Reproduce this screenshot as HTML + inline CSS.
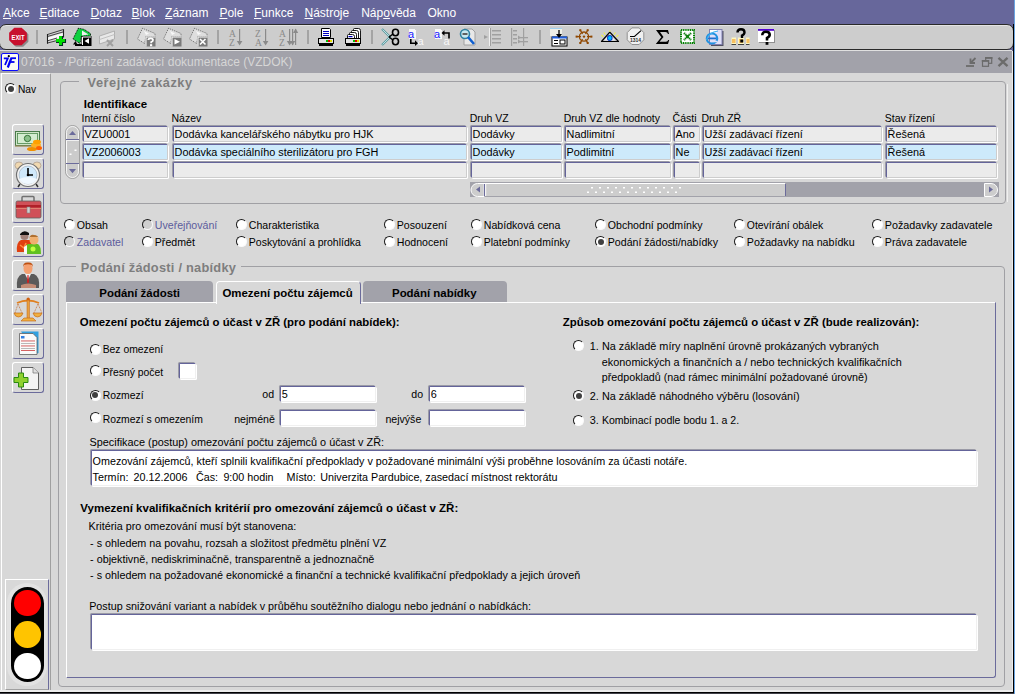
<!DOCTYPE html><html><head><meta charset="utf-8"><style>
*{box-sizing:border-box;margin:0;padding:0}
html,body{width:1015px;height:694px;overflow:hidden;background:#d8d8d8;font-family:"Liberation Sans",sans-serif;font-size:11px;color:#000}
.a{position:absolute}
.t{position:absolute;white-space:nowrap;line-height:20px}
.fld{position:absolute;background:#ebebeb;border-top:1px solid #64649a;border-left:1px solid #64649a;border-right:1px solid #cdcdcd;border-bottom:1px solid #cdcdcd;box-shadow:-1px -1px 0 #9a9aa6, 1px 1px 0 #fff;border-radius:1.5px}
.sel{background:#cdeafb}
.wf{background:#fff;border-right-color:#f0f0f0;border-bottom-color:#f0f0f0}
.radio{position:absolute;width:11px;height:11px;border-radius:50%;background:#fff;border:1px solid;border-color:#1a1a1a #fafafa #fafafa #1a1a1a}
.radio.on::after{content:"";position:absolute;left:1.5px;top:1.5px;width:6px;height:6px;border-radius:50%;background:#404040}
.radio.dr{background:#d0d0d0}
.gbox{position:absolute;border:1px solid #a0a0a4;border-radius:4px}
.ibtn{position:absolute;left:12px;width:32px;height:31px;border-top:1px solid #fff;border-left:1px solid #fff;border-right:1px solid #6b6b9b;border-bottom:1px solid #6b6b9b;border-radius:3px}
.tab{position:absolute;top:281px;height:22px;background:#a2a2aa;border-radius:4px 4px 0 0}
</style></head><body>
<div class="a" style="left:0;top:0;width:1015px;height:51px;background:#67679b"></div>
<div class="a" style="left:1014px;top:0;width:1px;height:694px;background:#6aa4e0"></div>
<div class="t" style="left:3px;top:3px;font-size:12px;color:#fff;text-underline-offset:1px"><u>A</u>kce</div>
<div class="t" style="left:39.4px;top:3px;font-size:12px;color:#fff;text-underline-offset:1px"><u>E</u>ditace</div>
<div class="t" style="left:90.6px;top:3px;font-size:12px;color:#fff;text-underline-offset:1px"><u>D</u>otaz</div>
<div class="t" style="left:131.6px;top:3px;font-size:12px;color:#fff;text-underline-offset:1px"><u>B</u>lok</div>
<div class="t" style="left:165.1px;top:3px;font-size:12px;color:#fff;text-underline-offset:1px"><u>Z</u>áznam</div>
<div class="t" style="left:219.4px;top:3px;font-size:12px;color:#fff;text-underline-offset:1px"><u>P</u>ole</div>
<div class="t" style="left:254px;top:3px;font-size:12px;color:#fff;text-underline-offset:1px"><u>F</u>unkce</div>
<div class="t" style="left:304.5px;top:3px;font-size:12px;color:#fff;text-underline-offset:1px"><u>N</u>ástroje</div>
<div class="t" style="left:361.2px;top:3px;font-size:12px;color:#fff;text-underline-offset:1px">Náp<u>o</u>věda</div>
<div class="t" style="left:427.4px;top:3px;font-size:12px;color:#fff;text-underline-offset:1px">Okno</div>
<div class="a" style="left:-1px;top:24px;width:1015px;height:26px;background:#cdcdcd;border:1px solid #2a2a2a;border-radius:7px 7px 7px 7px;box-shadow:inset 0 1px 0 #e4e4e4"></div>
<div class="a" style="left:0;top:50px;width:1012px;height:1px;background:#e0e0e0"></div>
<svg class="a" style="left:0;top:0" width="1015" height="52" viewBox="0 0 1015 52"><polygon points="28.37,41.67 23.17,46.87 15.83,46.87 10.63,41.67 10.63,34.33 15.83,29.13 23.17,29.13 28.37,34.33" fill="#8a8a8a"/><polygon points="26.87,40.17 21.67,45.37 14.33,45.37 9.13,40.17 9.13,32.83 14.33,27.63 21.67,27.63 26.87,32.83" fill="#c8102e"/><text x="18" y="39.6" font-family="Liberation Sans" font-weight="bold" font-size="6.6" fill="#fff" text-anchor="middle" textLength="13" lengthAdjust="spacingAndGlyphs">EXIT</text><rect x="36" y="30" width="2" height="14" fill="#a4a4a4"/><path d="M47.5,34.5 L63.5,29.5 L63.5,38 L47.5,43.5 Z" fill="#d8d8d8"/><path d="M48,37.5 L63,33 L63,37 L48,41 Z" fill="#fafafa"/><path d="M47.5,34.5 L63.5,29.5 M47.5,36.5 L63.5,31.8 M47.5,40.8 L57,38 M47.5,43 L56,40.8" stroke="#303030" stroke-width="0.9" fill="none"/><path d="M47.5,34 V43.8 M63.5,29.2 V37.5" stroke="#202020" stroke-width="1.1"/><path d="M56,39 H59 V36 H62.5 V39 H65.5 V42.5 H62.5 V45.5 H59 V42.5 H56 Z" fill="#00e000"/><path d="M59,42.5 H56 M62.5,42.5 V45.5 H59 M65.5,39 V42.5 H62.5 M62.5,36 V39" stroke="#003020" stroke-width="1.1" fill="none"/><path d="M78.3,28.3 L73,39 L80,43.5 L81.5,36 L90.5,36 L90.5,33.5 L84,29.3 Z" fill="#10d040" stroke="#000" stroke-width="0.9" stroke-dasharray="1 0.8"/><path d="M82,30.5 L88.5,34.5 L82,35.5 Z" fill="#f0f0f0"/><rect x="81.5" y="36" width="10" height="10" fill="#000"/><path d="M82.5,45 V37 H91" stroke="#fff" stroke-width="1" fill="none"/><path d="M84.5,41 L89,38.2 L89,43.8 Z" fill="#fff"/><path d="M73,44.5 L75.5,41 L77.5,44.5 Z" fill="#000"/><rect x="75" y="44" width="7" height="2" fill="#000"/><g transform="translate(99,29)"><path d="M0.5,7 L15.5,2 L15.5,10 L0.5,15 Z" fill="#e8e8e8" stroke="#b0b0b0" stroke-width="1"/><path d="M0.5,10.5 L15.5,5.5" stroke="#c0c0c0"/><path d="M8,11 L14,17 M14,11 L8,17" stroke="#a0a0a0" stroke-width="2"/></g><rect x="126" y="30" width="2" height="14" fill="#a4a4a4"/><g transform="translate(137,28)"><path d="M5.5,0.3 L0.5,11 L7.5,15.5 L9,8.5 L18,8.5 L18,5.5 Z" fill="#dedede" stroke="#6a6a6a" stroke-width="1" stroke-dasharray="1 1"/><path d="M7,3 L12,5.5 L9,7 Z" fill="#f8f8f8"/><rect x="8.5" y="8.5" width="10" height="10" fill="#7a7a7a"/><path d="M9,18.5 V9 H18.5" stroke="#fff" stroke-width="1" fill="none"/><path d="M11.3,12 Q11.3,10.3 13.6,10.3 Q16,10.3 16,12 Q16,13.3 14.2,14 V15.2" stroke="#fff" stroke-width="1.8" fill="none"/><rect x="13" y="16.2" width="2.2" height="2" fill="#fff"/></g><g transform="translate(163,28)"><path d="M5.5,0.3 L0.5,11 L7.5,15.5 L9,8.5 L18,8.5 L18,5.5 Z" fill="#dedede" stroke="#6a6a6a" stroke-width="1" stroke-dasharray="1 1"/><path d="M7,3 L12,5.5 L9,7 Z" fill="#f8f8f8"/><rect x="8.5" y="8.5" width="10" height="10" fill="#7a7a7a"/><path d="M9,18.5 V9 H18.5" stroke="#fff" stroke-width="1" fill="none"/><path d="M11.5,11 L17,13.8 L11.5,16.6 Z" fill="#fff"/></g><g transform="translate(189,28)"><path d="M5.5,0.3 L0.5,11 L7.5,15.5 L9,8.5 L18,8.5 L18,5.5 Z" fill="#dedede" stroke="#6a6a6a" stroke-width="1" stroke-dasharray="1 1"/><path d="M7,3 L12,5.5 L9,7 Z" fill="#f8f8f8"/><rect x="8.5" y="8.5" width="10" height="10" fill="#7a7a7a"/><path d="M9,18.5 V9 H18.5" stroke="#fff" stroke-width="1" fill="none"/><path d="M11,11 L16.5,16.5 M16.5,11 L11,16.5" stroke="#fff" stroke-width="1.6"/></g><rect x="217" y="30" width="2" height="14" fill="#a4a4a4"/><g transform="translate(229,28)" fill="#888" stroke="none"><text x="0" y="8.5" font-family="Liberation Serif" font-size="9.5" fill="#8a8a8a">A</text><text x="0" y="17.5" font-family="Liberation Serif" font-size="9.5" fill="#8a8a8a">Z</text><rect x="10" y="1" width="1.2" height="15" fill="#8a8a8a"/><path d="M7.8,13 L13.4,13 L10.6,17.5 Z" fill="#8a8a8a"/></g><g transform="translate(255,28)" fill="#888" stroke="none"><text x="0" y="8.5" font-family="Liberation Serif" font-size="9.5" fill="#8a8a8a">Z</text><text x="0" y="17.5" font-family="Liberation Serif" font-size="9.5" fill="#8a8a8a">A</text><rect x="10" y="1" width="1.2" height="15" fill="#8a8a8a"/><path d="M7.8,13 L13.4,13 L10.6,17.5 Z" fill="#8a8a8a"/></g><g transform="translate(279,28)" fill="#888" stroke="none"><text x="0" y="8.5" font-family="Liberation Serif" font-size="9.5" fill="#8a8a8a">A</text><text x="0" y="17.5" font-family="Liberation Serif" font-size="9.5" fill="#8a8a8a">Z</text><rect x="10" y="1" width="1.2" height="15" fill="#8a8a8a"/><path d="M7.8,13 L13.4,13 L10.6,17.5 Z" fill="#8a8a8a"/><rect x="13" y="1" width="1.2" height="16" fill="#8a8a8a"/><path d="M11,13 L16.2,13 L13.6,17.5 Z" fill="#8a8a8a"/><rect x="16" y="1" width="1.2" height="16" fill="#8a8a8a"/><path d="M14,5 L19.2,5 L16.6,0.5 Z" fill="#8a8a8a"/></g><rect x="307" y="30" width="2" height="14" fill="#a4a4a4"/><g transform="translate(318,28)"><path d="M3.5,0.5 h8 l1,1 v8 h-9 Z" fill="#fff" stroke="#000" stroke-width="1"/><rect x="5" y="3" width="6" height="1" fill="#0000c0"/><rect x="5" y="5" width="6" height="1" fill="#0000c0"/><rect x="5" y="7" width="6" height="1" fill="#0000c0"/><rect x="0.5" y="10.5" width="15" height="5" fill="#e4e4e4" stroke="#000" stroke-width="1"/><rect x="8" y="12" width="2" height="2" fill="#00c000"/><rect x="10" y="12" width="2" height="2" fill="#e00000"/><rect x="12" y="12" width="2" height="2" fill="#e0e000"/><rect x="1" y="16" width="14" height="2" fill="#000"/></g><g transform="translate(345,28)"><path d="M8.5,10 V1.5 Q8.5,0.5 9.5,0.5 H13.5 Q15.5,0.5 15.5,2.5 V10" fill="#fff" stroke="#000" stroke-width="0.9"/><path d="M6.5,10 V3.5 Q6.5,2.5 7.5,2.5 H11.5 Q13.5,2.5 13.5,4.5 V10" fill="#fff" stroke="#000" stroke-width="0.9"/><path d="M4.5,10 V5.5 Q4.5,4.5 5.5,4.5 H9.5 Q11.5,4.5 11.5,6.5 V10" fill="#fff" stroke="#000" stroke-width="0.9"/><path d="M2.5,10.5 V7.5 Q2.5,6.5 3.5,6.5 H7.5 Q9.5,6.5 9.5,8.5 V10.5" fill="#fff" stroke="#000" stroke-width="0.9"/><rect x="3.5" y="8" width="4" height="1.2" fill="#0000c0"/><rect x="0.5" y="10.5" width="15" height="5" fill="#e4e4e4" stroke="#000" stroke-width="1"/><rect x="8" y="12" width="2" height="2" fill="#00c000"/><rect x="10" y="12" width="2" height="2" fill="#e00000"/><rect x="12" y="12" width="2" height="2" fill="#e0e000"/><rect x="1" y="16" width="14" height="2" fill="#000"/></g><rect x="371" y="30" width="2" height="14" fill="#a4a4a4"/><g transform="translate(381,28)"><path d="M1,1 L9,9 L1,17" stroke="#5a9aa0" stroke-width="2.2" fill="none"/><path d="M1.5,1.5 L9,9 L1.5,16.5" stroke="#d8f0f0" stroke-width="0.8" fill="none"/><path d="M8,9 L12,6 M8,9 L12,12" stroke="#000" stroke-width="1.5"/><ellipse cx="14.5" cy="4.5" rx="3" ry="3.2" fill="none" stroke="#000" stroke-width="1.6"/><ellipse cx="14.5" cy="13.5" rx="3" ry="3.2" fill="none" stroke="#000" stroke-width="1.6"/></g><g transform="translate(407,27)"><path d="M1.5,1.5 h6 l2,2 v9 h-8 Z" fill="#f8f8f8" stroke="#c8c8c8" stroke-width="0.8"/><text x="1" y="10.5" font-family="Liberation Sans" font-size="11" fill="#1818ff">a</text><text x="10.5" y="18" font-family="Liberation Sans" font-size="11" fill="#f8f8f8">a</text><path d="M3.8,12 v4.2 h5" stroke="#000" stroke-width="1.6" fill="none"/><path d="M8,13.3 L11,16.2 L8,19 Z" fill="#000"/></g><g transform="translate(433,27)"><path d="M1.5,1.5 h6 l2,2 v9 h-8 Z" fill="#f8f8f8" stroke="#c8c8c8" stroke-width="0.8"/><text x="1" y="10.5" font-family="Liberation Sans" font-size="11" fill="#1818ff">a</text><text x="10.5" y="18" font-family="Liberation Sans" font-size="11" fill="#f8f8f8">a</text><path d="M16,11.5 v-5.5 h-5" stroke="#000" stroke-width="1.6" fill="none"/><path d="M11.5,3.2 L8.5,6 L11.5,8.8 Z" fill="#000"/></g><g transform="translate(459,28)"><path d="M5,1 h8 l3,3 v13 h-11 Z" fill="#e8e8e8" stroke="#a0a0a0"/><circle cx="6" cy="6" r="4.5" fill="#c8e8f0" stroke="#3080a0" stroke-width="1.6"/><rect x="3.5" y="5" width="5" height="2" fill="#606060"/><path d="M9,9 L15,16" stroke="#1060d0" stroke-width="2.6"/></g><g transform="translate(484,28)" fill="#a0a0a0"><rect x="5" y="0" width="1" height="18" fill="#f0f0f0"/><rect x="6" y="0" width="1" height="18"/><rect x="8" y="2" width="9" height="1.5"/><rect x="8" y="6" width="9" height="1.5"/><rect x="8" y="10" width="9" height="1.5"/><rect x="8" y="14" width="9" height="1.5"/><path d="M0,7 L4,9 L0,11 Z"/></g><g transform="translate(511,28)" fill="#a0a0a0"><rect x="0" y="0" width="1.2" height="18"/><rect x="12" y="0" width="1.2" height="18"/><rect x="2" y="2" width="4" height="1.5"/><rect x="2" y="6" width="4" height="1.5"/><rect x="2" y="10" width="4" height="1.5"/><rect x="2" y="14" width="4" height="1.5"/><rect x="7" y="9" width="10" height="1.3"/><rect x="7" y="13" width="10" height="1.3"/><path d="M7,7.5 L10,9.5 L7,11.5 Z"/><path d="M7,11.5 L10,13.5 L7,15.5 Z"/></g><rect x="539" y="30" width="2" height="14" fill="#a4a4a4"/><g transform="translate(550,28)"><rect x="0" y="0" width="12" height="8" fill="#f0f0e8"/><rect x="0" y="0" width="12" height="1" fill="#a0d0f0"/><rect x="2" y="9" width="15" height="9" fill="#fff" stroke="#000" stroke-width="1"/><rect x="2" y="8.5" width="15" height="2" fill="#2060e0"/><rect x="4" y="12" width="4" height="1" fill="#000"/><rect x="4" y="15" width="4" height="1" fill="#000"/><rect x="10" y="12" width="5" height="4" fill="none" stroke="#000" stroke-width="1"/><path d="M9,2 v6" stroke="#000" stroke-width="1.3"/><path d="M6,6 L9,10 L12,6 Z" fill="#000"/></g><circle cx="584" cy="36.6" r="4.6" fill="none" stroke="#904800" stroke-width="1.3"/><path d="M587.00,36.60 L591.60,36.60" stroke="#904800" stroke-width="1.3"/><path d="M585.50,39.20 L587.80,43.18" stroke="#904800" stroke-width="1.3"/><path d="M582.50,39.20 L580.20,43.18" stroke="#904800" stroke-width="1.3"/><path d="M581.00,36.60 L576.40,36.60" stroke="#904800" stroke-width="1.3"/><path d="M582.50,34.00 L580.20,30.02" stroke="#904800" stroke-width="1.3"/><path d="M585.50,34.00 L587.80,30.02" stroke="#904800" stroke-width="1.3"/><rect x="590.40" y="35.60" width="2" height="2" fill="#904800"/><rect x="586.70" y="42.01" width="2" height="2" fill="#904800"/><rect x="579.30" y="42.01" width="2" height="2" fill="#904800"/><rect x="575.60" y="35.60" width="2" height="2" fill="#904800"/><rect x="579.30" y="29.19" width="2" height="2" fill="#904800"/><rect x="586.70" y="29.19" width="2" height="2" fill="#904800"/><circle cx="584" cy="36.6" r="1.2" fill="#904800"/><path d="M601.5,41.5 L609.8,32.2 L618.5,41.5 Z" fill="#b8b8b8" stroke="#000" stroke-width="1.2" stroke-linejoin="round"/><path d="M604,40.5 L609.8,34 L615.5,40.5 Z" fill="#f0f0f0"/><rect x="607.6" y="35.6" width="4.4" height="4.8" rx="1.6" fill="#00c0ff" stroke="#0020c0" stroke-width="1"/><path d="M601.5,35 L603.3,36.8 M603.8,32.5 L605.3,34.5 M609.8,30.5 V32 M615.5,32.5 L614,34.5 M618.3,35 L616.4,36.8" stroke="#f0f040" stroke-width="1.1"/><g transform="translate(635.5,36.2)"><path d="M-3.6,-8.3 H3.6 L8.3,-3.6 V3.6 L3.6,8.3 H-3.6 L-8.3,3.6 V-3.6 Z" fill="#f0f0f0" stroke="#909090" stroke-width="1"/><path d="M-5.5,0.3 H-1 L5.5,-5.5" stroke="#000" stroke-width="1.1" fill="none"/><text x="0" y="5.8" font-family="Liberation Sans" font-weight="bold" font-size="5" fill="#303030" text-anchor="middle">1314</text></g><path d="M656,30 H668 L669,34 H668 Q667.5,32.2 665.5,32 H660 L663.5,37 L659.5,41.8 H666 Q667.8,41.6 668.2,40 H669.2 L668,44 H655.8 L661.3,37.2 Z" fill="#000"/><g transform="translate(680,29)"><rect x="1" y="1" width="13" height="13" fill="#fff" stroke="#008000" stroke-width="2" stroke-dasharray="1.1 0.7"/><path d="M4,4 L11,11 M11,4 L4,11" stroke="#108010" stroke-width="2.2" stroke-dasharray="1.2 0.6"/><rect x="6" y="6" width="3" height="3" fill="#108010"/></g><g transform="translate(705,28)"><rect x="6" y="3" width="12.5" height="15" fill="#505060"/><rect x="4.5" y="1.5" width="12.5" height="15" fill="#e0e0f8" stroke="#8080b0" stroke-width="1"/><rect x="5" y="2" width="7" height="2.5" fill="#fff"/><ellipse cx="7" cy="10.5" rx="5.2" ry="5" fill="none" stroke="#2090e0" stroke-width="2.2"/><rect x="3" y="9.5" width="8" height="1.8" fill="#2070d0"/><path d="M8.5,13.5 H12.5" stroke="#e0e0f8" stroke-width="1.6"/><path d="M1.5,12 Q4,4 13,3" stroke="#40b0f0" stroke-width="1.1" fill="none"/></g><g transform="translate(731,28)"><rect x="0.5" y="9.5" width="4.5" height="7" fill="#fff8c0" stroke="#404040" stroke-width="0" /><rect x="1" y="11" width="3.5" height="4" fill="#f8c060"/><rect x="7" y="9.5" width="6" height="7" fill="#fff8c0"/><rect x="8" y="11" width="4" height="4" fill="#f8c060"/><rect x="15" y="9.5" width="3.5" height="7" fill="#fff8c0"/><rect x="15.5" y="11" width="3" height="4" fill="#f8c060"/><rect x="0.5" y="16" width="4.5" height="1" fill="#404040"/><rect x="7" y="16" width="6" height="1" fill="#404040"/><rect x="15" y="16" width="3.5" height="1" fill="#404040"/><path d="M6.5,4.5 Q6.5,1.2 10,1.2 Q13.5,1.2 13.5,4.3 Q13.5,6.3 11,7.5 V10" stroke="#000" stroke-width="2.4" fill="none"/><rect x="9.3" y="11.5" width="3" height="3" fill="#000"/></g><g transform="translate(758,29)"><rect x="0" y="0" width="16" height="13" fill="#fff"/><rect x="0" y="0" width="16" height="1.8" fill="#5000d0"/><rect x="16" y="1" width="1" height="13" fill="#909090"/><rect x="1" y="13" width="16" height="1" fill="#909090"/><path d="M4.3,6.2 Q4.3,2.8 8,2.8 Q11.7,2.8 11.7,5.8 Q11.7,7.8 9,9 V11.5" stroke="#000" stroke-width="2.6" fill="none"/><rect x="7.6" y="13" width="2.8" height="2.8" fill="#000"/></g></svg>
<div class="a" style="left:0;top:51px;width:1012px;height:22px;background:#a2a2aa"></div>
<div class="a" style="left:1px;top:53px;width:18px;height:18px;background:#fafaf2;border:1.6px solid #0a0aff;border-radius:2px"></div>
<svg class="a" style="left:0;top:50px" width="20" height="22" viewBox="0 50 20 22"><circle cx="8.8" cy="56.2" r="1.1" fill="#000"/><path d="M3.8,58.3 H7.8 L5,65" stroke="#0000f0" stroke-width="1.8" fill="none"/><path d="M11.2,58.5 L7.8,67.5" stroke="#0000f0" stroke-width="2.2"/><path d="M10.4,58.2 H16" stroke="#0000f0" stroke-width="1.8"/><path d="M9.6,62 H14.5" stroke="#0000f0" stroke-width="1.8"/></svg>
<div class="t" style="left:21px;top:52px;font-size:12px;color:#d6d6d6">07016 - /Pořízení zadávací dokumentace (VZDOK)</div>
<svg class="a" style="left:955px;top:50px" width="60" height="24" viewBox="0 0 60 24" fill="none" stroke="#6b6b6b"><path d="M11,16 H19" stroke-width="1.8"/><path d="M20.5,8 L15.5,13" stroke-width="1.8"/><path d="M15.5,8.5 V13 H20" stroke-width="1.8"/><rect x="30.7" y="7.8" width="6" height="5.5" stroke-width="1.2"/><path d="M30,7.9 H37.5" stroke-width="1.8"/><rect x="27.5" y="10.8" width="6" height="5.5" fill="#a2a2aa" stroke-width="1.2"/><path d="M26.8,10.9 H34.2" stroke-width="1.8"/><path d="M43.5,7.8 L52.5,16.2 M52.5,7.8 L43.5,16.2" stroke-width="2.3"/></svg>
<div class="a" style="left:1012px;top:51px;width:1px;height:641px;background:#ececec"></div>
<div class="a" style="left:1013px;top:24px;width:1px;height:669px;background:#000"></div>
<div class="a" style="left:0;top:690px;width:1013px;height:2px;background:#ececec"></div>
<div class="a" style="left:0;top:692px;width:1014px;height:1px;background:#000"></div>
<div class="a" style="left:0;top:693px;width:1014px;height:1px;background:#404048"></div>
<div class="a" style="left:1px;top:73px;width:50px;height:617px;border-top:1px solid #fff;border-left:1px solid #fff;border-right:1px solid #a0a0a0"></div>
<div class="radio on" style="left:5px;top:83px"></div>
<div class="t" style="left:18px;top:80px;font-size:10.2px">Nav</div>
<div class="ibtn" style="top:124px"></div>
<div class="ibtn" style="top:158px"></div>
<div class="ibtn" style="top:192px"></div>
<div class="ibtn" style="top:226px"></div>
<div class="ibtn" style="top:260px"></div>
<div class="ibtn" style="top:294px"></div>
<div class="ibtn" style="top:328px"></div>
<div class="ibtn" style="top:362px"></div>
<svg class="a" style="left:0;top:0" width="60" height="400" viewBox="0 0 60 400"><g transform="translate(12,124)"><rect x="3.5" y="7.5" width="24" height="14" fill="#cfe6c8" stroke="#4a7a4a" stroke-width="1"/><rect x="5.5" y="9.5" width="20" height="10" fill="#d4ecd0" stroke="#3a7a3a" stroke-width="0.7"/><circle cx="15.5" cy="14.5" r="3.2" fill="#8ac08a" stroke="#206020" stroke-width="0.8"/><rect x="3" y="21.5" width="25" height="1.2" fill="#a09060"/><ellipse cx="24" cy="21" rx="5" ry="2.5" fill="#ffb020"/><ellipse cx="25" cy="18" rx="4" ry="2.2" fill="#ffa000"/><ellipse cx="20" cy="25" rx="5" ry="2" fill="#f09000"/><ellipse cx="27" cy="24" rx="3" ry="2" fill="#ff6000"/></g><g transform="translate(12,158)"><ellipse cx="7" cy="7.5" rx="4" ry="3.5" fill="#f0d8b0" stroke="#b0a090" stroke-width="0.8"/><ellipse cx="25" cy="7.5" rx="4" ry="3.5" fill="#f0d8b0" stroke="#b0a090" stroke-width="0.8"/><path d="M8,26 L6,29 M24,26 L26,29" stroke="#303030" stroke-width="1.5"/><circle cx="16" cy="17" r="11.5" fill="#f4f4f4" stroke="#707070" stroke-width="1.2"/><circle cx="16" cy="17" r="9" fill="#cfe8fb" stroke="#9ab" stroke-width="0.6"/><path d="M7,21 Q16,17 25,21 Q22,26 16,26 Q10,26 7,21 Z" fill="#f0f8ff"/><path d="M16,10 V17 H21" stroke="#000" stroke-width="1.6" fill="none"/><circle cx="16" cy="17" r="1.3" fill="#000"/></g><g transform="translate(12,192)"><path d="M10,9 V5.5 Q10,4.5 11,4.5 H21 Q22,4.5 22,5.5 V9" fill="none" stroke="#707070" stroke-width="1.5"/><rect x="4" y="9" width="25" height="17" rx="1.5" fill="#d05058" stroke="#606060" stroke-width="0.8"/><rect x="4" y="13" width="25" height="2.5" fill="#b02028"/><rect x="4" y="16" width="25" height="1" fill="#e08070"/><rect x="15" y="15" width="3" height="6" fill="#d0d0d0" stroke="#808080" stroke-width="0.6"/></g><g transform="translate(12,226)"><path d="M5,26 Q4,16 9,14 H18 Q21,16 20,26 Z" fill="#e04010"/><path d="M8,19 L12,22 L14,17" stroke="#ff9040" stroke-width="1.5" fill="none"/><circle cx="12.5" cy="10" r="4" fill="#a08078"/><path d="M8,8 Q12,3 17,7 L17,9 H8 Z" fill="#101010"/><path d="M12,28 Q11,20 16,18 H26 Q29,20 29,28 Z" fill="#60c020"/><path d="M12,28 V21 L15,19 V28 Z" fill="#f8f8f8"/><circle cx="22" cy="14" r="4.5" fill="#f0b070"/><path d="M17,13 Q18,8 22,9 Q26,9 27,13 L26,11 H18 Z" fill="#b07030"/><circle cx="21" cy="23" r="2.5" fill="#c0ff40"/></g><g transform="translate(12,260)"><path d="M5,28 Q4,16 10,14 H22 Q28,16 27,28 Z" fill="#5a5a5a"/><path d="M13,14 L16,20 L19,14 Z" fill="#f0f0f0"/><path d="M15.5,15 L16.5,15 L17,22 L16,24 L15,22 Z" fill="#d02020"/><path d="M9,25 Q16,22 24,25 V28 H9 Z" fill="#f0a080" opacity="0.7"/><ellipse cx="16" cy="8.5" rx="4.5" ry="5.5" fill="#f4a070"/><path d="M11,7 Q11,2 16,2.5 Q21,2 21,7 L20,5 Q16,3.5 12,5 Z" fill="#c05010"/></g><g transform="translate(12,294)"><path d="M5,9 Q16,4 27,9" stroke="#e08020" stroke-width="1.8" fill="none"/><rect x="15" y="5" width="2.4" height="20" fill="#e8a040" stroke="#c06010" stroke-width="0.5"/><circle cx="16.2" cy="5" r="1.6" fill="#d06010"/><path d="M6,10 L3,19 M6,10 L10,19 M26,10 L22,19 M26,10 L30,19" stroke="#c06020" stroke-width="0.7" stroke-dasharray="1 0.7"/><path d="M2,19 H11 Q10,23 6.5,23 Q3,23 2,19 Z" fill="#f0b040" stroke="#c06010" stroke-width="0.6"/><path d="M21,19 H30 Q29,23 25.5,23 Q22,23 21,19 Z" fill="#f0b040" stroke="#c06010" stroke-width="0.6"/><path d="M9,27 L12,24 H21 L24,27 Z" fill="#f0b040" stroke="#c06010" stroke-width="0.6"/></g><g transform="translate(12,328)"><path d="M9,3.5 H26.5 V25 L24,26 Z" fill="#30a0e0"/><path d="M7.5,5.5 H21 L25,9.5 V26.5 H7.5 Z" fill="#fafafa" stroke="#606060" stroke-width="0.8"/><rect x="9" y="8" width="3.5" height="2.5" fill="#3080e0"/><rect x="9" y="12.5" width="14" height="0.9" fill="#d05050"/><rect x="9" y="15" width="14" height="0.9" fill="#b0b0b0"/><rect x="9" y="17.5" width="14" height="0.9" fill="#d05050"/><rect x="9" y="20" width="14" height="0.9" fill="#b0b0b0"/><rect x="9" y="22" width="14" height="0.9" fill="#d05050"/></g><g transform="translate(12,362)"><path d="M9.5,5.5 H21 L26.5,11 V27.5 H9.5 Z" fill="#f4f4f4" stroke="#505050" stroke-width="0.9"/><path d="M21,5.5 V11 H26.5" fill="#e0e0e0" stroke="#707070" stroke-width="0.7"/><path d="M6.5,11 H11.5 V15.5 H16 V20.5 H11.5 V25 H6.5 V20.5 H2 V15.5 H6.5 Z" fill="#90d030" stroke="#2a8a10" stroke-width="1"/></g></svg>
<div class="a" style="left:5px;top:579px;width:44px;height:111px;border-top:1px solid #fff;border-left:1px solid #fff;border-right:1px solid #6b6b9b;border-bottom:1px solid #a0a0a0"></div>
<div class="a" style="left:7px;top:583px;width:40px;height:103px;background:#e2e2e2;border-radius:20px"></div>
<div class="a" style="left:10.5px;top:587px;width:33px;height:95px;background:#000;border-radius:17px"></div>
<div class="a" style="left:14px;top:589.5px;width:26.5px;height:26.5px;background:#f00;border-radius:50%"></div>
<div class="a" style="left:14px;top:621px;width:26.5px;height:26.5px;background:#ffc400;border-radius:50%"></div>
<div class="a" style="left:14px;top:652.5px;width:26.5px;height:26.5px;background:#fff;border-radius:50%"></div>
<div class="gbox" style="left:60px;top:81px;width:946px;height:123px"></div>
<div class="a" style="left:1007px;top:84px;width:1px;height:118px;background:#f0f0f0"></div>
<div class="a" style="left:79px;top:74px;width:121px;height:16px;background:#d8d8d8"></div>
<div class="t" style="left:87.6px;top:73px;font-size:12.8px;font-weight:700;color:#7e7e7e;letter-spacing:0.5px">Veřejné zakázky</div>
<div class="t" style="left:83.8px;top:94px;font-size:11.5px;font-weight:700">Identifikace</div>
<div class="t" style="left:81.6px;top:109px;font-size:10.33px">Interní číslo</div>
<div class="t" style="left:171.5px;top:108px;font-size:10.5px">Název</div>
<div class="t" style="left:469.7px;top:108px;font-size:10.5px">Druh VZ</div>
<div class="t" style="left:563.7px;top:108px;font-size:10.5px">Druh VZ dle hodnoty</div>
<div class="t" style="left:672.6px;top:108px;font-size:10.5px">Části</div>
<div class="t" style="left:701.5px;top:108px;font-size:10.5px">Druh ZŘ</div>
<div class="t" style="left:884.8px;top:108px;font-size:10.5px">Stav řízení</div>
<div class="fld" style="left:83px;top:126px;width:85px;height:16px"></div>
<div class="t" style="left:84.6px;top:124px;font-size:10.85px">VZU0001</div>
<div class="fld" style="left:173px;top:126px;width:294px;height:16px"></div>
<div class="t" style="left:174.6px;top:124px;font-size:10.85px">Dodávka kancelářského nábytku pro HJK</div>
<div class="fld" style="left:471px;top:126px;width:91px;height:16px"></div>
<div class="t" style="left:472.6px;top:124px;font-size:10.85px">Dodávky</div>
<div class="fld" style="left:565px;top:126px;width:106px;height:16px"></div>
<div class="t" style="left:566.6px;top:124px;font-size:10.85px">Nadlimitní</div>
<div class="fld" style="left:674px;top:126px;width:26px;height:16px"></div>
<div class="t" style="left:675.6px;top:124px;font-size:10.85px">Ano</div>
<div class="fld" style="left:703px;top:126px;width:179px;height:16px"></div>
<div class="t" style="left:704.6px;top:124px;font-size:10.85px">Užší zadávací řízení</div>
<div class="fld" style="left:886px;top:126px;width:111px;height:16px"></div>
<div class="t" style="left:887.6px;top:124px;font-size:10.85px">Řešená</div>
<div class="fld sel" style="left:83px;top:144px;width:85px;height:16px"></div>
<div class="t" style="left:84.6px;top:142px;font-size:10.85px">VZ2006003</div>
<div class="fld sel" style="left:173px;top:144px;width:294px;height:16px"></div>
<div class="t" style="left:174.6px;top:142px;font-size:10.85px">Dodávka speciálního sterilizátoru pro FGH</div>
<div class="fld sel" style="left:471px;top:144px;width:91px;height:16px"></div>
<div class="t" style="left:472.6px;top:142px;font-size:10.85px">Dodávky</div>
<div class="fld sel" style="left:565px;top:144px;width:106px;height:16px"></div>
<div class="t" style="left:566.6px;top:142px;font-size:10.85px">Podlimitní</div>
<div class="fld sel" style="left:674px;top:144px;width:26px;height:16px"></div>
<div class="t" style="left:675.6px;top:142px;font-size:10.85px">Ne</div>
<div class="fld sel" style="left:703px;top:144px;width:179px;height:16px"></div>
<div class="t" style="left:704.6px;top:142px;font-size:10.85px">Užší zadávací řízení</div>
<div class="fld sel" style="left:886px;top:144px;width:111px;height:16px"></div>
<div class="t" style="left:887.6px;top:142px;font-size:10.85px">Řešená</div>
<div class="fld" style="left:83px;top:162px;width:85px;height:16px"></div>
<div class="fld" style="left:173px;top:162px;width:294px;height:16px"></div>
<div class="fld" style="left:471px;top:162px;width:91px;height:16px"></div>
<div class="fld" style="left:565px;top:162px;width:106px;height:16px"></div>
<div class="fld" style="left:674px;top:162px;width:26px;height:16px"></div>
<div class="fld" style="left:703px;top:162px;width:179px;height:16px"></div>
<div class="fld" style="left:886px;top:162px;width:111px;height:16px"></div>
<svg class="a" style="left:0;top:0" width="1015" height="210" viewBox="0 0 1015 210">
<rect x="65.5" y="125.5" width="14" height="53" rx="7" fill="#cbcbcb" stroke="#a0a0a0" stroke-width="1"/>
<path d="M66.5,139 V132.5 A6,6 0 0 1 78.5,132.5 V139" fill="none" stroke="#f4f4f4" stroke-width="1"/>
<path d="M66.5,164 V171.5 A6,6 0 0 0 78.5,171.5 V164" fill="none" stroke="#f4f4f4" stroke-width="1"/>
<path d="M66.5,140 V163" stroke="#fafafa" stroke-width="1"/>
<path d="M66,139.5 H79" stroke="#6b6b9b" stroke-width="1"/><path d="M66,140.5 H79" stroke="#f0f0f0" stroke-width="1"/>
<path d="M66,163.5 H79" stroke="#6b6b9b" stroke-width="1"/>
<path d="M69,135 L72.5,131 L76,135 Z" fill="#6b6b9b"/>
<path d="M69,169 L72.5,173.2 L76,169 Z" fill="#6b6b9b"/>
<rect x="69.5" y="153.5" width="2" height="1.5" fill="#fff"/><rect x="74.5" y="149.5" width="2" height="1.5" fill="#fff"/>
<rect x="470" y="182" width="529" height="15" fill="#a2a2aa"/>
<path d="M484,183.5 H785.5 V196 H484" fill="#cdcdcd"/>
<path d="M484,183.5 H785" stroke="#fff" stroke-width="1"/>
<path d="M785.5,184 V196" stroke="#6b6b9b" stroke-width="1"/>
<path d="M484,183.5 H477.5 A6.5,6.5 0 0 0 477.5,196.5 H484 Z" fill="#cdcdcd" stroke="#fff" stroke-width="1"/>
<path d="M484.5,184 V196" stroke="#6b6b9b" stroke-width="1.2"/><path d="M485.7,184 V196" stroke="#fff" stroke-width="1"/>
<path d="M480,186.5 L476,189.5 L480,192.5 Z" fill="#6b6b9b"/>
<rect x="591" y="187" width="2" height="1.5" fill="#fff"/><rect x="587" y="191.5" width="2" height="1.5" fill="#fff"/><rect x="599" y="187" width="2" height="1.5" fill="#fff"/><rect x="595" y="191.5" width="2" height="1.5" fill="#fff"/><rect x="607" y="187" width="2" height="1.5" fill="#fff"/><rect x="603" y="191.5" width="2" height="1.5" fill="#fff"/><rect x="615" y="187" width="2" height="1.5" fill="#fff"/><rect x="611" y="191.5" width="2" height="1.5" fill="#fff"/><rect x="623" y="187" width="2" height="1.5" fill="#fff"/><rect x="619" y="191.5" width="2" height="1.5" fill="#fff"/><rect x="631" y="187" width="2" height="1.5" fill="#fff"/><rect x="627" y="191.5" width="2" height="1.5" fill="#fff"/><rect x="639" y="187" width="2" height="1.5" fill="#fff"/><rect x="635" y="191.5" width="2" height="1.5" fill="#fff"/><rect x="647" y="187" width="2" height="1.5" fill="#fff"/><rect x="643" y="191.5" width="2" height="1.5" fill="#fff"/><rect x="655" y="187" width="2" height="1.5" fill="#fff"/><rect x="651" y="191.5" width="2" height="1.5" fill="#fff"/><rect x="663" y="187" width="2" height="1.5" fill="#fff"/><rect x="659" y="191.5" width="2" height="1.5" fill="#fff"/><rect x="671" y="187" width="2" height="1.5" fill="#fff"/><rect x="667" y="191.5" width="2" height="1.5" fill="#fff"/><rect x="679" y="187" width="2" height="1.5" fill="#fff"/><rect x="675" y="191.5" width="2" height="1.5" fill="#fff"/>
<path d="M984.5,196.5 V183.5 H991 A6.5,6.5 0 0 1 991,196.5 Z" fill="#cdcdcd" stroke="#fff" stroke-width="1"/>
<path d="M989,186.5 L993,189.5 L989,192.5 Z" fill="#6b6b9b"/>
</svg>
<div class="radio" style="left:64px;top:219px"></div>
<div class="t" style="left:76.8px;top:215px;font-size:10.6px">Obsah</div>
<div class="radio dr" style="left:64px;top:236px"></div>
<div class="t" style="left:76.8px;top:232px;font-size:10.6px;color:#5c5c9c">Zadavatel</div>
<div class="radio dr" style="left:142px;top:219px"></div>
<div class="t" style="left:154.8px;top:215px;font-size:10.6px;color:#5c5c9c">Uveřejňování</div>
<div class="radio" style="left:142px;top:236px"></div>
<div class="t" style="left:154.8px;top:232px;font-size:10.6px">Předmět</div>
<div class="radio" style="left:236px;top:219px"></div>
<div class="t" style="left:248.8px;top:215px;font-size:10.57px">Charakteristika</div>
<div class="radio" style="left:236px;top:236px"></div>
<div class="t" style="left:248.8px;top:232px;font-size:10.5px">Poskytování a prohlídka</div>
<div class="radio" style="left:384px;top:219px"></div>
<div class="t" style="left:396.8px;top:215px;font-size:10.6px">Posouzení</div>
<div class="radio" style="left:384px;top:236px"></div>
<div class="t" style="left:396.8px;top:232px;font-size:10.6px">Hodnocení</div>
<div class="radio" style="left:471px;top:219px"></div>
<div class="t" style="left:483.8px;top:215px;font-size:10.6px">Nabídková cena</div>
<div class="radio" style="left:471px;top:236px"></div>
<div class="t" style="left:483.8px;top:233px;font-size:10.4px">Platební podmínky</div>
<div class="radio" style="left:595px;top:219px"></div>
<div class="t" style="left:607.8px;top:215px;font-size:10.6px">Obchodní podmínky</div>
<div class="radio on" style="left:595px;top:236px"></div>
<div class="t" style="left:607.8px;top:232px;font-size:10.6px">Podání žádosti/nabídky</div>
<div class="radio" style="left:734px;top:219px"></div>
<div class="t" style="left:746.8px;top:216px;font-size:10.41px">Otevírání obálek</div>
<div class="radio" style="left:734px;top:236px"></div>
<div class="t" style="left:746.8px;top:232px;font-size:10.66px">Požadavky na nabídku</div>
<div class="radio" style="left:872px;top:219px"></div>
<div class="t" style="left:884.8px;top:215px;font-size:10.75px">Požadavky zadavatele</div>
<div class="radio" style="left:872px;top:236px"></div>
<div class="t" style="left:884.8px;top:232px;font-size:10.65px">Práva zadavatele</div>
<div class="gbox" style="left:58px;top:266px;width:947px;height:421px"></div>
<div class="a" style="left:76px;top:259px;width:165px;height:16px;background:#d8d8d8"></div>
<div class="t" style="left:80.8px;top:258px;font-size:12.8px;font-weight:700;color:#7e7e7e;letter-spacing:0.25px">Podání žádosti / nabídky</div>
<div class="tab" style="left:66px;width:147px"></div>
<div class="tab" style="left:363px;width:144px"></div>
<div class="a" style="left:66px;top:302px;width:930px;height:376px;border-top:1px solid #fff;border-left:1px solid #fff;border-right:1px solid #6b6b9b;border-bottom:1px solid #6b6b9b;border-radius:0 0 3px 0"></div>
<div class="tab" style="left:215.5px;width:145px;background:#d8d8d8;border-top:1px solid #fff;border-left:1px solid #fff;border-right:1px solid #6b6b9b;height:23px"></div>
<div class="t" style="left:99.3px;top:283px;font-size:11.45px;font-weight:700">Podání žádosti</div>
<div class="t" style="left:222.4px;top:283px;font-size:11.45px;font-weight:700">Omezení počtu zájemců</div>
<div class="t" style="left:392px;top:283px;font-size:11.45px;font-weight:700">Podání nabídky</div>
<div class="t" style="left:79.8px;top:312px;font-size:11.38px;font-weight:700">Omezení počtu zájemců o účast v ZŘ (pro podání nabídek):</div>
<div class="t" style="left:562.8px;top:312px;font-size:11.39px;font-weight:700">Způsob omezování počtu zájemců o účast v ZŘ (bude realizován):</div>
<div class="radio" style="left:89.5px;top:343.5px"></div>
<div class="t" style="left:102.7px;top:340px;font-size:10.37px">Bez omezení</div>
<div class="radio" style="left:89.5px;top:365px"></div>
<div class="t" style="left:102.7px;top:363px;font-size:10.37px">Přesný počet</div>
<div class="radio on" style="left:89.5px;top:389.5px"></div>
<div class="t" style="left:102.7px;top:386px;font-size:10.37px">Rozmezí</div>
<div class="radio" style="left:89.5px;top:412px"></div>
<div class="t" style="left:102.7px;top:410px;font-size:10.37px">Rozmezí s omezením</div>
<div class="fld wf" style="left:179px;top:363px;width:17px;height:16px"></div>
<div class="t" style="left:262.3px;top:384px;font-size:10.6px">od</div>
<div class="fld wf" style="left:280px;top:386px;width:96px;height:16px"></div>
<div class="t" style="left:281.8px;top:384px;font-size:10.85px">5</div>
<div class="t" style="left:411.3px;top:384px;font-size:10.6px">do</div>
<div class="fld wf" style="left:429px;top:386px;width:96px;height:16px"></div>
<div class="t" style="left:430.8px;top:384px;font-size:10.85px">6</div>
<div class="t" style="left:234.2px;top:408.5px;font-size:10.6px">nejméně</div>
<div class="fld wf" style="left:280px;top:410px;width:96px;height:16px"></div>
<div class="t" style="left:385.4px;top:408.5px;font-size:10.6px">nejvýše</div>
<div class="fld wf" style="left:429px;top:410px;width:96px;height:16px"></div>
<div class="radio" style="left:573px;top:340px"></div>
<div class="t" style="left:589.8px;top:336px;font-size:10.85px">1.</div>
<div class="t" style="left:601.9px;top:336px;font-size:10.88px">Na základě míry naplnění úrovně prokázaných vybraných</div>
<div class="t" style="left:601.8px;top:352px;font-size:10.86px">ekonomických a finančních a / nebo technických kvalifikačních</div>
<div class="t" style="left:601.8px;top:367px;font-size:10.72px">předpokladů (nad rámec minimální požadované úrovně)</div>
<div class="radio on" style="left:573px;top:390px"></div>
<div class="t" style="left:589.8px;top:386px;font-size:10.85px">2.</div>
<div class="t" style="left:601.9px;top:386px;font-size:10.85px">Na základě náhodného výběru (losování)</div>
<div class="radio" style="left:573px;top:414.5px"></div>
<div class="t" style="left:589.8px;top:410px;font-size:10.85px">3.</div>
<div class="t" style="left:601.9px;top:410px;font-size:10.55px">Kombinací podle bodu 1. a 2.</div>
<div class="t" style="left:89.5px;top:432px;font-size:10.87px">Specifikace (postup) omezování počtu zájemců o účast v ZŘ:</div>
<div class="fld wf" style="left:91px;top:450px;width:886px;height:36px"></div>
<div class="t" style="left:92.6px;top:451px;font-size:10.75px">Omezování zájemců, kteří splnili kvalifikační předpoklady v požadované minimální výši proběhne losováním za účasti notáře.</div>
<div class="t" style="left:92.6px;top:467px;font-size:10.75px">Termín:</div>
<div class="t" style="left:133.6px;top:467px;font-size:10.75px">20.12.2006</div>
<div class="t" style="left:196px;top:467px;font-size:10.75px">Čas:</div>
<div class="t" style="left:223.4px;top:467px;font-size:10.75px">9:00 hodin</div>
<div class="t" style="left:286.5px;top:467px;font-size:10.75px">Místo:</div>
<div class="t" style="left:320.2px;top:467px;font-size:10.75px">Univerzita Pardubice, zasedací místnost rektorátu</div>
<div class="t" style="left:80.3px;top:498px;font-size:11.5px;font-weight:700">Vymezení kvalifikačních kritérií pro omezování zájemců o účast v ZŘ:</div>
<div class="t" style="left:88.6px;top:516px;font-size:10.78px">Kritéria pro omezování musí být stanovena:</div>
<div class="t" style="left:90.1px;top:533px;font-size:10.78px">- s ohledem na povahu, rozsah a složitost předmětu plnění VZ</div>
<div class="t" style="left:90.1px;top:548.5px;font-size:10.78px">- objektivně, nediskriminačně, transparentně a jednoznačně</div>
<div class="t" style="left:90.1px;top:564.5px;font-size:10.78px">- s ohledem na požadované ekonomické a finanční a technické kvalifikační předpoklady a jejich úroveň</div>
<div class="t" style="left:89.2px;top:596px;font-size:10.78px">Postup snižování variant a nabídek v průběhu soutěžního dialogu nebo jednání o nabídkách:</div>
<div class="fld wf" style="left:91px;top:614px;width:886px;height:36px"></div>
</body></html>
